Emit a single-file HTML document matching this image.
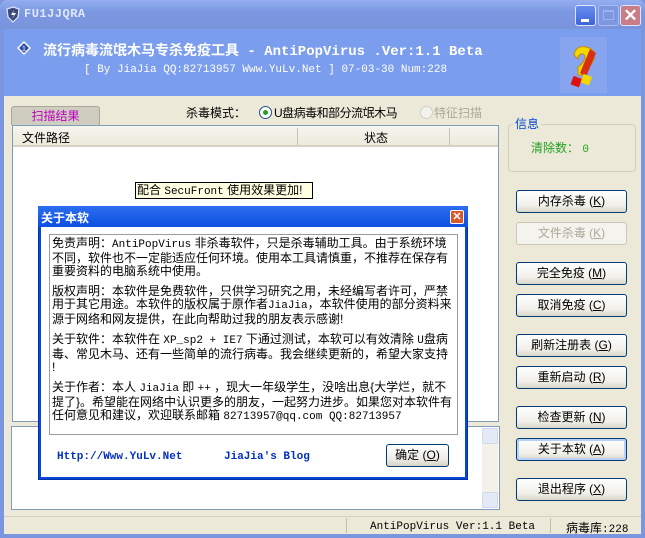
<!DOCTYPE html>
<html><head><meta charset="utf-8"><style>
*{margin:0;padding:0;box-sizing:border-box}
body{width:645px;height:538px;overflow:hidden;background:#7a96df;font-family:"Liberation Sans","Noto Sans CJK SC",sans-serif;font-size:12px;position:relative}
.abs{position:absolute}
.title{left:0;top:0;width:645px;height:29px;background:linear-gradient(#94aef0,#7c98e2 40%,#7a94dc);border-radius:7px 7px 0 0}
.title .t{left:24px;top:7px;color:#dfe8ff;font:bold 12px "Liberation Mono",monospace;letter-spacing:0.5px}
.tb{top:5px;width:21px;height:21px;border:1px solid #dfe6fb;border-radius:3px}
.banner{left:4px;top:29px;width:637px;height:67px;background:#7b9ded}
.body{left:4px;top:96px;width:637px;height:438px;background:#ece9d8}
.btn{position:absolute;left:516px;width:111px;height:23px;border:1px solid #003c74;border-radius:3px;background:linear-gradient(#fff,#f0efe8 70%,#d8d5c8);text-align:center;line-height:21px;font-size:12px;color:#000}
.btn.dis{border-color:#c9c7ba;color:#aca899;background:#f4f3ee}
.dlgtxt{font-family:"Liberation Sans","Noto Sans CJK SC",sans-serif;font-size:12px;line-height:13px;color:#000}
.dlgtxt p{margin-bottom:7px}
.mono{font-family:"Liberation Mono",monospace;font-size:11px}
</style></head><body>
<div class="abs title">
 <svg class="abs" style="left:5px;top:6px" width="16" height="17"><path d="M8 1 L14 3 L13 11 L8 16 L3 11 L2 3Z" fill="#3b4a7a" stroke="#dfe6ff" stroke-width="1.2"/><path d="M9 4 L6 9 L9 9 L7 13 L11 7 L8 7Z" fill="#fff"/></svg>
 <div class="abs t">FU1JJQRA</div>
 <div class="abs tb" style="left:575px;background:linear-gradient(#6a8ef0,#3a64d8)"><div class="abs" style="left:5px;top:13px;width:8px;height:3px;background:#fff"></div></div>
 <div class="abs tb" style="left:598px;background:#7d97e0;border-color:#a9baf0"><div class="abs" style="left:4px;top:4px;width:11px;height:10px;border:1px solid #9fb2ec;border-top-width:2px"></div></div>
 <div class="abs tb" style="left:620px;background:#c97d86;color:#fff;font:bold 17px 'Liberation Sans';text-align:center;line-height:19px">✕</div>
</div>
<div class="abs" style="left:0;top:29px;width:4px;height:509px;background:#7a96df"></div>
<div class="abs banner">
 <svg class="abs" style="left:13px;top:12px" width="14" height="14"><path d="M7 0 L14 7 L7 14 L0 7Z" fill="#fff"/><path d="M7 2 L12 7 L7 12 L2 7Z" fill="#3050b0"/><text x="5" y="10" fill="#fff" font-size="7" font-family="Liberation Sans">1</text></svg>
 <div class="abs" style="left:39px;top:11px;color:#fff;font-weight:bold;font-size:14px;font-family:'Liberation Mono','Noto Sans CJK SC',monospace;white-space:nowrap">流行病毒流氓木马专杀免疫工具 - AntiPopVirus .Ver:1.1 Beta</div>
 <div class="abs" style="left:80px;top:35px;color:#fff;font:11px 'Liberation Mono',monospace;white-space:nowrap">[ By JiaJia  QQ:82713957  Www.YuLv.Net ]  07-03-30  Num:228</div>
 <div class="abs" style="left:556px;top:8px;width:47px;height:56px;background:#86a5ee"></div>
 <svg class="abs" style="left:560px;top:14px" width="40" height="46"><path d="M10 12 Q12 2 22 4 Q32 6 30 16 Q28 22 22 26 L22 32 L14 32 L14 24 Q20 20 21 15 Q21 10 17 11 Q14 12 14 16Z" fill="#f2d800" stroke="#c88a00"/><path d="M26 6 L32 10 L22 34 L16 30Z" fill="#d83010"/><rect x="8" y="34" width="9" height="9" fill="#e01010" transform="rotate(20 12 38)"/><rect x="18" y="32" width="9" height="9" fill="#f2d800" transform="rotate(20 22 36)"/></svg>
</div>
<div class="abs body"></div>
<div class="abs" style="left:641px;top:29px;width:4px;height:509px;background:#7a96df"></div>
<div class="abs" style="left:0;top:534px;width:645px;height:4px;background:#7a96df"></div>

<div class="abs" style="left:11px;top:106px;width:89px;height:19px;background:#cfccc0;border:1px solid #aaa69a;border-bottom:none;border-radius:3px 3px 0 0;color:#c000c0;text-align:center;line-height:18px;font-size:12px">扫描结果</div>
<div class="abs" style="left:186px;top:104px;font-size:12px">杀毒模式：</div>
<div class="abs" style="left:259px;top:106px;width:13px;height:13px;border:1px solid #1c5180;border-radius:50%;background:#fff"><div class="abs" style="left:3px;top:3px;width:5px;height:5px;border-radius:50%;background:#21a121"></div></div>
<div class="abs" style="left:274px;top:104px;font-size:12px;letter-spacing:-0.5px">U盘病毒和部分流氓木马</div>
<div class="abs" style="left:420px;top:106px;width:13px;height:13px;border:1px solid #d0cfc6;border-radius:50%;background:#f3f2ec"></div>
<div class="abs" style="left:434px;top:104px;font-size:12px;color:#aca899">特征扫描</div>

<div class="abs" style="left:12px;top:125px;width:487px;height:297px;background:#fff;border:1px solid #7f9db9"></div>
<div class="abs" style="left:13px;top:126px;width:485px;height:21px;background:linear-gradient(#f6f5ef,#ebeadb);border-bottom:2px solid #d6d2c2"></div>
<div class="abs" style="left:22px;top:129px">文件路径</div>
<div class="abs" style="left:297px;top:128px;width:1px;height:17px;background:#c7c5b2"></div>
<div class="abs" style="left:364px;top:129px">状态</div>
<div class="abs" style="left:449px;top:128px;width:1px;height:17px;background:#c7c5b2"></div>
<div class="abs" style="left:135px;top:182px;width:178px;height:17px;background:#ffffe1;border:1px solid #000;font-size:12px;line-height:15px;padding-left:1px;white-space:nowrap">配合 <span class="mono">SecuFront</span> 使用效果更加!</div>

<div class="abs" style="left:11px;top:426px;width:489px;height:84px;background:#fff;border:1px solid #7f9db9"></div>
<div class="abs" style="left:482px;top:428px;width:16px;height:80px;background:#f3f1ea"></div>
<div class="abs" style="left:482px;top:428px;width:16px;height:16px;background:#e4e9f6;border:1px solid #cfd8ee;border-radius:2px"></div>
<div class="abs" style="left:482px;top:492px;width:16px;height:16px;background:#e4e9f6;border:1px solid #cfd8ee;border-radius:2px"></div>

<div class="abs" style="left:4px;top:516px;width:637px;height:18px;background:#ece9d8;border-top:1px solid #d6d2c2"></div>
<div class="abs" style="left:346px;top:518px;width:1px;height:15px;background:#c4c0b0"></div>
<div class="abs" style="left:550px;top:518px;width:1px;height:15px;background:#c4c0b0"></div>
<div class="abs mono" style="left:370px;top:521px;white-space:nowrap">AntiPopVirus  Ver:1.1 Beta</div>
<div class="abs" style="left:566px;top:519px;white-space:nowrap">病毒库<span class="mono">:228</span></div>

<div class="abs" style="left:508px;top:124px;width:128px;height:48px;border:1px solid #d0d0bf;border-radius:4px"></div>
<div class="abs" style="left:513px;top:115px;background:#ece9d8;color:#0046d5;padding:0 2px">信息</div>
<div class="abs" style="left:531px;top:139px;color:#21a121">清除数： <span class="mono">0</span></div>

<div class="btn" style="top:190px">内存杀毒 (<u>K</u>)</div>
<div class="btn dis" style="top:222px">文件杀毒 (<u>K</u>)</div>
<div class="btn" style="top:262px">完全免疫 (<u>M</u>)</div>
<div class="btn" style="top:294px">取消免疫 (<u>C</u>)</div>
<div class="btn" style="top:334px">刷新注册表 (<u>G</u>)</div>
<div class="btn" style="top:366px">重新启动 (<u>R</u>)</div>
<div class="btn" style="top:406px">检查更新 (<u>N</u>)</div>
<div class="btn" style="top:438px;box-shadow:inset 0 0 0 2px #b8d0f8">关于本软 (<u>A</u>)</div>
<div class="btn" style="top:478px">退出程序 (<u>X</u>)</div>

<div class="abs" style="left:38px;top:206px;width:430px;height:274px;background:#0a46d8;border:1px solid #0031a8"></div>
<div class="abs" style="left:38px;top:206px;width:430px;height:21px;background:linear-gradient(#2b6ef0,#0d4fe0)"></div>
<div class="abs" style="left:41px;top:209px;color:#fff;font-weight:bold;font-size:12px">关于本软</div>
<div class="abs" style="left:450px;top:210px;width:14px;height:14px;background:#d8582a;border:1px solid #fff;border-radius:2px;color:#fff;font:bold 11px 'Liberation Sans';text-align:center;line-height:12px">✕</div>
<div class="abs" style="left:41px;top:227px;width:424px;height:250px;background:#fff"></div>
<div class="abs" style="left:49px;top:234px;width:409px;height:201px;border:1px solid #9c9c9c;background:#fff"></div>
<div class="abs dlgtxt" style="left:52px;top:237px;width:402px">
<p>免责声明：<span class="mono">AntiPopVirus</span> 非杀毒软件，只是杀毒辅助工具。由于系统环境不同，软件也不一定能适应任何环境。使用本工具请慎重，不推荐在保存有重要资料的电脑系统中使用。</p>
<p>版权声明：本软件是免费软件，只供学习研究之用，未经编写者许可，严禁用于其它用途。本软件的版权属于原作者<span class="mono">JiaJia</span>，本软件使用的部分资料来源于网络和网友提供，在此向帮助过我的朋友表示感谢!</p>
<p>关于软件：本软件在 <span class="mono">XP_sp2 + IE7</span> 下通过测试，本软可以有效清除 <span class="mono">U</span>盘病毒、常见木马、还有一些简单的流行病毒。我会继续更新的，希望大家支持<br>!</p>
<p>关于作者：本人 <span class="mono">JiaJia</span> 即 <span class="mono">++</span> ，现大一年级学生，没啥出息{大学烂，就不提了}。希望能在网络中认识更多的朋友，一起努力进步。如果您对本软件有任何意见和建议，欢迎联系邮箱 <span class="mono">82713957@qq.com QQ:82713957</span></p>
</div>
<div class="abs" style="left:57px;top:451px;color:#0030c0;font:bold 11px 'Liberation Mono',monospace;white-space:nowrap">Http://Www.YuLv.Net</div>
<div class="abs" style="left:224px;top:451px;color:#0030c0;font:bold 11px 'Liberation Mono',monospace;white-space:nowrap">JiaJia's Blog</div>
<div class="abs" style="left:386px;top:444px;width:63px;height:23px;border:1px solid #003c74;border-radius:3px;background:linear-gradient(#fff,#ecebe4 70%,#d6d3c6);text-align:center;line-height:21px">确定 (<u>O</u>)</div>
</body></html>
